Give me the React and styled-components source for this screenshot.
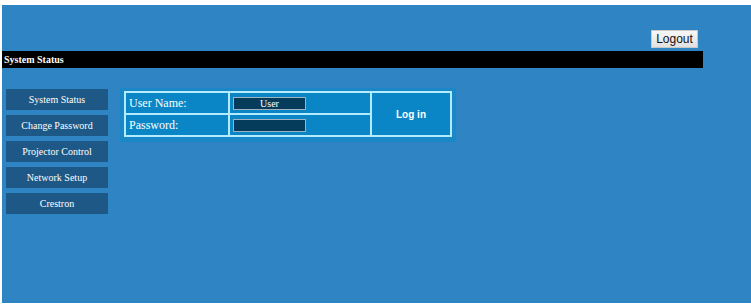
import styled, { createGlobalStyle } from 'styled-components';

const GlobalStyle = createGlobalStyle`
  html, body {
    margin: 0;
    padding: 0;
    background: #ffffff;
  }
`;

const menuItems = ['System Status', 'Change Password', 'Projector Control', 'Network Setup', 'Crestron'];

function App() {
  return (
    <>
      <GlobalStyle />
      <Page>
        <Screen>
          <Frame>
            <TopBar>
              <LogoutButton>Logout</LogoutButton>
            </TopBar>
            <TitleBar>System Status</TitleBar>
            <Content>
              <Menu>
                {menuItems.map((item) => (
                  <MenuButton key={item}>{item}</MenuButton>
                ))}
              </Menu>
              <LoginPanel>
                <LoginGrid>
                  <LabelCell>User Name:</LabelCell>
                  <InputCell>
                    <Field defaultValue='User' />
                  </InputCell>
                  <SubmitCell>Log in</SubmitCell>
                  <LabelCell>Password:</LabelCell>
                  <InputCell>
                    <Field type='password' />
                  </InputCell>
                </LoginGrid>
              </LoginPanel>
            </Content>
          </Frame>
        </Screen>
      </Page>
    </>
  );
}

export default App;

const Page = styled.div`
  padding: 5px 0 3px 2px;
`;

const Screen = styled.div`
  height: 298px;
  background: #2f84c3;
`;

const Frame = styled.div`
  width: 701px;
`;

const TopBar = styled.div`
  height: 46px;
  display: flex;
  justify-content: flex-end;
  align-items: flex-end;
  padding-right: 5px;
  box-sizing: border-box;
  padding-bottom: 3px;
`;

const LogoutButton = styled.button`
  height: 18px;
  width: 47px;
  padding: 0;
  border: 1px solid #c9c9c9;
  background: linear-gradient(#f7f7f7, #e1e1e1);
  font-family: 'Liberation Sans', Arial, sans-serif;
  font-size: 12px;
  color: #111;
  line-height: 16px;
`;

const TitleBar = styled.div`
  height: 17px;
  background: #000000;
  color: #ffffff;
  font-family: 'Liberation Serif', 'Times New Roman', serif;
  font-weight: bold;
  font-size: 10px;
  line-height: 17px;
  padding-left: 2px;
`;

const Content = styled.div`
  display: flex;
  align-items: flex-start;
  gap: 12px;
  padding: 20px 0 0 4px;
`;

const Menu = styled.div`
  display: flex;
  flex-direction: column;
  gap: 5px;
  margin-top: 1px;
`;

const MenuButton = styled.div`
  width: 102px;
  height: 21px;
  background: #1d5886;
  color: #ffffff;
  font-family: 'Liberation Serif', 'Times New Roman', serif;
  font-size: 10px;
  line-height: 21px;
  text-align: center;
`;

const LoginPanel = styled.div`
  background: #1a87c6;
  padding: 3px 4px 5px 4px;
`;

const LoginGrid = styled.div`
  display: grid;
  grid-template-columns: 102px 140px 78px;
  grid-template-rows: 20px 20px;
  gap: 2px;
  padding: 2px;
  background: #b4ecff;
`;

const LabelCell = styled.div`
  background: #0a86c6;
  color: #ffffff;
  font-family: 'Liberation Serif', 'Times New Roman', serif;
  font-size: 12px;
  line-height: 20px;
  padding-left: 3px;
`;

const InputCell = styled.div`
  background: #0a86c6;
  display: flex;
  align-items: center;
  padding-left: 3px;
`;

const Field = styled.input`
  width: 73px;
  height: 13px;
  box-sizing: border-box;
  padding: 0;
  border: 1px solid #9fb3bf;
  background: #053b5b;
  color: #ffffff;
  font-family: 'Liberation Serif', 'Times New Roman', serif;
  font-size: 10px;
  text-align: center;
  outline: none;
`;

const SubmitCell = styled.div`
  grid-row: span 2;
  background: #0a86c6;
  color: #ffffff;
  font-family: 'Liberation Sans', Arial, sans-serif;
  font-weight: bold;
  font-size: 10px;
  display: flex;
  align-items: center;
  justify-content: center;
`;
